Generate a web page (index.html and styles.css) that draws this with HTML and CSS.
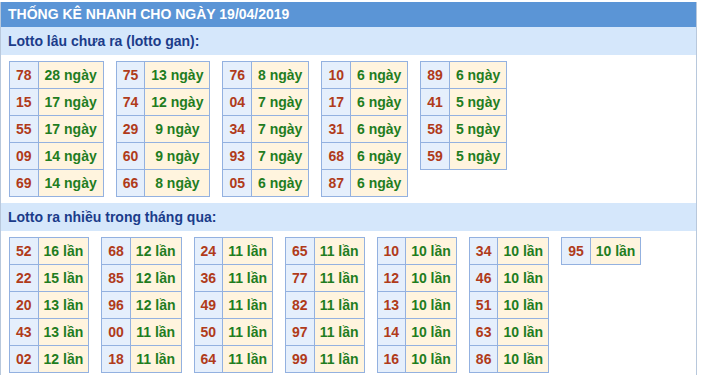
FILE: index.html
```html
<!DOCTYPE html>
<html>
<head>
<meta charset="utf-8">
<link rel="stylesheet" href="styles.css">
</head>
<body>
<div class="box">
  <div class="title">THỐNG KÊ NHANH CHO NGÀY 19/04/2019</div>
  <div class="subtitle">Lotto lâu chưa ra (lotto gan):</div>
  <div class="group">
    <table><tr><td class="n">78</td><td class="v">28 ngày</td></tr><tr><td class="n">15</td><td class="v">17 ngày</td></tr><tr><td class="n">55</td><td class="v">17 ngày</td></tr><tr><td class="n">09</td><td class="v">14 ngày</td></tr><tr><td class="n">69</td><td class="v">14 ngày</td></tr></table>
    <table><tr><td class="n">75</td><td class="v">13 ngày</td></tr><tr><td class="n">74</td><td class="v">12 ngày</td></tr><tr><td class="n">29</td><td class="v">9 ngày</td></tr><tr><td class="n">60</td><td class="v">9 ngày</td></tr><tr><td class="n">66</td><td class="v">8 ngày</td></tr></table>
    <table><tr><td class="n">76</td><td class="v">8 ngày</td></tr><tr><td class="n">04</td><td class="v">7 ngày</td></tr><tr><td class="n">34</td><td class="v">7 ngày</td></tr><tr><td class="n">93</td><td class="v">7 ngày</td></tr><tr><td class="n">05</td><td class="v">6 ngày</td></tr></table>
    <table><tr><td class="n">10</td><td class="v">6 ngày</td></tr><tr><td class="n">17</td><td class="v">6 ngày</td></tr><tr><td class="n">31</td><td class="v">6 ngày</td></tr><tr><td class="n">68</td><td class="v">6 ngày</td></tr><tr><td class="n">87</td><td class="v">6 ngày</td></tr></table>
    <table><tr><td class="n">89</td><td class="v">6 ngày</td></tr><tr><td class="n">41</td><td class="v">5 ngày</td></tr><tr><td class="n">58</td><td class="v">5 ngày</td></tr><tr><td class="n">59</td><td class="v">5 ngày</td></tr></table>
  </div>
  <div class="subtitle">Lotto ra nhiều trong tháng qua:</div>
  <div class="group times">
    <table><tr><td class="n">52</td><td class="v">16 lần</td></tr><tr><td class="n">22</td><td class="v">15 lần</td></tr><tr><td class="n">20</td><td class="v">13 lần</td></tr><tr><td class="n">43</td><td class="v">13 lần</td></tr><tr><td class="n">02</td><td class="v">12 lần</td></tr></table>
    <table><tr><td class="n">68</td><td class="v">12 lần</td></tr><tr><td class="n">85</td><td class="v">12 lần</td></tr><tr><td class="n">96</td><td class="v">12 lần</td></tr><tr><td class="n">00</td><td class="v">11 lần</td></tr><tr><td class="n">18</td><td class="v">11 lần</td></tr></table>
    <table><tr><td class="n">24</td><td class="v">11 lần</td></tr><tr><td class="n">36</td><td class="v">11 lần</td></tr><tr><td class="n">49</td><td class="v">11 lần</td></tr><tr><td class="n">50</td><td class="v">11 lần</td></tr><tr><td class="n">64</td><td class="v">11 lần</td></tr></table>
    <table><tr><td class="n">65</td><td class="v">11 lần</td></tr><tr><td class="n">77</td><td class="v">11 lần</td></tr><tr><td class="n">82</td><td class="v">11 lần</td></tr><tr><td class="n">97</td><td class="v">11 lần</td></tr><tr><td class="n">99</td><td class="v">11 lần</td></tr></table>
    <table><tr><td class="n">10</td><td class="v">10 lần</td></tr><tr><td class="n">12</td><td class="v">10 lần</td></tr><tr><td class="n">13</td><td class="v">10 lần</td></tr><tr><td class="n">14</td><td class="v">10 lần</td></tr><tr><td class="n">16</td><td class="v">10 lần</td></tr></table>
    <table><tr><td class="n">34</td><td class="v">10 lần</td></tr><tr><td class="n">46</td><td class="v">10 lần</td></tr><tr><td class="n">51</td><td class="v">10 lần</td></tr><tr><td class="n">63</td><td class="v">10 lần</td></tr><tr><td class="n">86</td><td class="v">10 lần</td></tr></table>
    <table><tr><td class="n">95</td><td class="v">10 lần</td></tr></table>
  </div>
</div>
</body>
</html>
```
FILE: styles.css
```css
html, body {
  margin: 0;
  padding: 0;
  background: #ffffff;
}
body {
  font-family: "Liberation Sans", Arial, sans-serif;
  font-weight: bold;
  font-size: 14px;
}
.box {
  margin-top: 2px;
  width: 697px;
  border-left: 1px solid #b8c8dc;
  border-right: 1px solid #b8c8dc;
  min-height: 373px;
  box-sizing: border-box;
}
.title {
  background: #5b95d6;
  color: #ffffff;
  height: 25px;
  line-height: 25px;
  padding-left: 7px;
}
.subtitle {
  background: #d5e7fb;
  color: #1b3c8a;
  height: 28px;
  line-height: 28px;
  padding-left: 7px;
}
.group {
  display: flex;
  align-items: flex-start;
  gap: 12px;
  padding: 6px 8px 6px 8px;
}
table {
  border-collapse: collapse;
}
td {
  border: 1px solid #93b1e0;
  height: 27px;
  padding: 0 6px;
  box-sizing: border-box;
  text-align: center;
}
td.n {
  background: #e5effc;
  color: #b03b1a;
}
td.v {
  background: #fff4de;
  color: #1f7d1f;
}
.times td.v {
  padding: 0 5px;
}
```
